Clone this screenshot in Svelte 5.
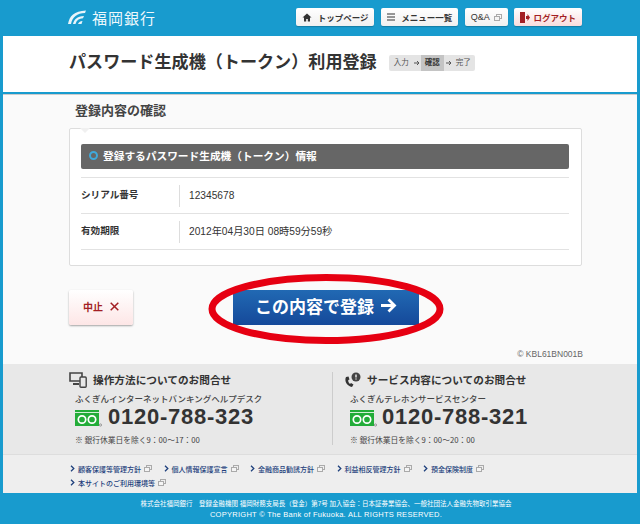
<script>
	const nav = [
		{ label: 'トップページ', icon: 'home' },
		{ label: 'メニュー一覧', icon: 'menu' },
		{ label: 'Q&A', icon: 'ext' },
	];

	const contacts = [
		{
			title: '操作方法についてのお問合せ',
			icon: 'pc',
			desk: 'ふくぎんインターネットバンキングヘルプデスク',
			tel: '0120-788-323',
			hours: '※ 銀行休業日を除く9：00～17：00',
		},
		{
			title: 'サービス内容についてのお問合せ',
			icon: 'tel',
			desk: 'ふくぎんテレホンサービスセンター',
			tel: '0120-788-321',
			hours: '※ 銀行休業日を除く9：00～20：00',
		},
	];

	const links = [
		'顧客保護等管理方針',
		'個人情報保護宣言',
		'金融商品勧誘方針',
		'利益相反管理方針',
		'預金保険制度',
		'本サイトのご利用環境等',
	];
</script>

{#snippet ext()}
	<svg class="ext" width="8" height="7" viewBox="0 0 8 7">
		<rect x="2.500" y="0.500" width="5" height="4" fill="none" stroke="#aaa" />
		<rect x="0.500" y="2.500" width="5" height="4" fill="#f4f4f4" stroke="#aaa" />
	</svg>
{/snippet}

{#snippet arrow()}
	<svg class="step-arrow" width="6" height="6" viewBox="0 0 6 6"><path d="M0 3h5M3 1l2 2-2 2" fill="none" stroke="#555" stroke-width="1" /></svg>
{/snippet}

<div class="page">
	<header>
		<div class="logo">
			<svg width="18" height="14" viewBox="0 0 18 14">
				<path d="M0 14C1.500 6 6 1 18 0.500L17 3C9 3 4.500 7 3 14zM5 14C6 9.500 9 6.500 16 6L15 8.300C11 8.500 8.500 10.500 7.500 14zM10 14C10.500 12.500 12 11 14.500 11L13.500 14z" fill="#e8f4fa" />
			</svg>
			<span>福岡銀行</span>
		</div>
		<nav>
			{#each nav as item}
				<button class="nav-btn" class:qa={item.icon === 'ext'}>
					{#if item.icon === 'home'}
						<svg width="10" height="9" viewBox="0 0 9 9"><path d="M4.500 0.500L9 4.500H7.500V8.500H5.300V6H3.700V8.500H1.500V4.500H0z" fill="#333" /></svg>
					{:else if item.icon === 'menu'}
						<svg width="8" height="8" viewBox="0 0 8 8"><path d="M0 1h8M0 4h8M0 7h8" stroke="#333" stroke-width="1.200" /></svg>
					{/if}
					<span>{item.label}</span>
					{#if item.icon === 'ext'}{@render ext()}{/if}
				</button>
			{/each}
			<button class="nav-btn logout">
				<svg width="10" height="11" viewBox="0 0 10 11"><path d="M0 0h5v11H0z" fill="#a31f24" /><path d="M6 4h1.500V2L10 5.500 7.500 9V7H6z" fill="#a31f24" /></svg>
				<span>ログアウト</span>
			</button>
		</nav>
	</header>

	<div class="title-area">
		<h1>パスワード生成機（トークン）利用登録</h1>
		<div class="steps">
			<span>入力</span>
			{@render arrow()}
			<span class="now">確認</span>
			{@render arrow()}
			<span class="last">完了</span>
		</div>
	</div>

	<main>
		<h2>登録内容の確認</h2>
		<section class="card">
			<div class="bar"><b class="ring"></b>登録するパスワード生成機（トークン）情報</div>
			<dl>
				<div class="row">
					<dt>シリアル番号</dt>
					<dd>12345678</dd>
				</div>
				<div class="row">
					<dt>有効期限</dt>
					<dd>2012年04月30日 08時59分59秒</dd>
				</div>
			</dl>
		</section>

		<div class="actions">
			<button class="cancel">中止
				<svg width="9" height="9" viewBox="0 0 9 9"><path d="M.7.7l7.600 7.600M8.300.7L.7 8.300" stroke="#a31f24" stroke-width="1.500" /></svg>
			</button>
			<button class="submit">この内容で登録
				<svg width="17" height="15" viewBox="0 0 17 15"><path d="M1 7.500h13M8.500 1.500l6 6-6 6" fill="none" stroke="#fff" stroke-width="2.800" /></svg>
			</button>
		</div>
		<svg class="ellipse" width="238" height="74" viewBox="0 0 238 74">
			<ellipse cx="119" cy="37" rx="114" ry="31.500" fill="none" stroke="#e60012" stroke-width="7" />
		</svg>
		<p class="code">© KBL61BN001B</p>
	</main>

	<section class="contact">
		{#each contacts as c}
			<div class="contact-col">
				<h3>
					{#if c.icon === 'pc'}
						<svg width="18" height="16" viewBox="0 0 18 16">
							<path d="M1 1h12v8H1z" fill="none" stroke="#444" stroke-width="1.600" />
							<path d="M4 12h6" stroke="#444" stroke-width="2" />
							<rect x="11" y="5" width="6.200" height="10.200" rx="1" fill="#e8e8e8" stroke="#444" stroke-width="1.400" />
						</svg>
					{:else}
						<svg width="18" height="16" viewBox="0 0 18 16">
							<path d="M2 5C0 9 3 14 8 15l1.500-2.500-2.500-1.500-1 1C4.500 11 4 9 4.300 8l1.200-.5L4.500 4.500z" fill="#333" />
							<circle cx="12" cy="5" r="4.500" fill="#444" />
							<path d="M12 2.500v3M12 6.500v1" stroke="#fff" stroke-width="1.300" />
						</svg>
					{/if}
					{c.title}
				</h3>
				<p class="desk">{c.desk}</p>
				<div class="tel">
					<svg width="27" height="17" viewBox="0 0 27 17">
						<rect width="24" height="16" fill="#22ac38" />
						<path d="M0 2.500h24" stroke="#fff" stroke-width="0.800" />
						<circle cx="7" cy="9.500" r="3.700" fill="none" stroke="#fff" stroke-width="1.700" />
						<circle cx="17" cy="9.500" r="3.700" fill="none" stroke="#fff" stroke-width="1.700" />
						<circle cx="25.500" cy="15" r="1.100" fill="none" stroke="#666" stroke-width="0.600" />
					</svg>
					<span>{c.tel}</span>
				</div>
				<p class="hours">{c.hours}</p>
			</div>
		{/each}
	</section>

	<ul class="links">
		{#each links as link}
			<li>
				<svg width="5" height="7" viewBox="0 0 5 7"><path d="M1 .8L3.800 3.500 1 6.200" fill="none" stroke="#1d3f7c" stroke-width="1.300" /></svg>
				<span>{link}</span>
				{@render ext()}
			</li>
		{/each}
	</ul>

	<footer>
		<p>株式会社福岡銀行　登録金融機関 福岡財務支局長（登金）第7号 加入協会：日本証券業協会、一般社団法人金融先物取引業協会</p>
		<p class="copy">COPYRIGHT © The Bank of Fukuoka. ALL RIGHTS RESERVED.</p>
	</footer>
</div>

<style>
	:global(body) {
		margin: 0;
		background: #189bce;
	}

	.page {
		width: 640px;
		height: 524px;
		overflow: hidden;
		background: #189bce;
		font-family: 'Liberation Sans', 'Noto Sans CJK JP', sans-serif;
		color: #333;
	}

	p,
	h1,
	h2,
	h3,
	dl,
	dd,
	ul {
		margin: 0;
		padding: 0;
	}

	header {
		height: 36px;
		box-sizing: border-box;
		padding: 8px 58px 0 68px;
		display: flex;
		justify-content: space-between;
	}

	.logo {
		display: flex;
		align-items: center;
		gap: 6px;
		height: 18px;
		color: #eef8fc;
		font-size: 15px;
		letter-spacing: 1px;
		font-weight: 400;
	}

	nav {
		display: flex;
		gap: 6.670px;
	}

	.nav-btn {
		height: 18px;
		padding: 0 6px;
		border: 0;
		border-radius: 2px;
		background: linear-gradient(#fff, #f0f0f0);
		box-shadow: 0 1px 1px rgba(0, 0, 0, 0.2);
		font-family: inherit;
		font-size: 8.500px;
		font-weight: 700;
		color: #333;
		display: flex;
		align-items: center;
		gap: 6px;
	}

	.nav-btn.qa {
		gap: 4px;
		font-weight: 400;
		font-size: 9px;
	}

	.logout {
		background: linear-gradient(#fff, #fbdcdc);
		color: #a31f24;
		gap: 3px;
	}

	.title-area {
		height: 56px;
		margin: 0 3px;
		box-sizing: border-box;
		padding: 0 0 2px 66px;
		background: #fff;
		display: flex;
		align-items: center;
		gap: 12px;
	}

	h1 {
		font-size: 17.100px;
		font-weight: 700;
		line-height: 24px;
		color: #333;
		white-space: nowrap;
	}

	.steps {
		height: 16px;
		padding: 0 4px 0 5px;
		display: flex;
		align-items: stretch;
		background: #e4e4e4;
		border-radius: 2px;
		font-size: 7.500px;
		line-height: 16px;
		color: #555;
	}

	.step-arrow {
		align-self: center;
		margin: 0 1px 0 5px;
	}

	.steps .now {
		background: #c4c4c4;
		padding: 0 4px;
		font-weight: 700;
		color: #333;
	}

	.steps .now + .step-arrow {
		margin: 0 4px 0 2px;
	}

	main {
		position: relative;
		height: 270px;
		margin: 2px 3px 0;
		box-sizing: border-box;
		padding: 7px 55px 0 66px;
		background: #fafafa;
		border-top: 1px solid #ccc;
	}

	h2 {
		margin-left: 6px;
		font-size: 13px;
		line-height: 18px;
		color: #444;
	}

	.card {
		position: relative;
		margin-top: 8px;
		height: 138px;
		box-sizing: border-box;
		padding: 15px 12px 0 11px;
		background: #fff;
		border: 1px solid #ddd;
		border-radius: 2px;
	}

	.card::before {
		content: '';
		position: absolute;
		top: -1px;
		left: 10px;
		border: 5px solid transparent;
		border-top-color: #f0f0f0;
		border-bottom: 0;
	}

	.bar {
		height: 25px;
		box-sizing: border-box;
		padding: 0 0 2px 8px;
		display: flex;
		align-items: center;
		gap: 5px;
		background: #666;
		border-radius: 2px;
		color: #fff;
		font-size: 10.700px;
		font-weight: 700;
	}

	.ring {
		width: 5px;
		height: 5px;
		border: 2px solid #3fa9dc;
		border-radius: 50%;
	}

	dl {
		margin-top: 8px;
		border-top: 1px solid #e2e2e2;
	}

	.row {
		height: 36px;
		box-sizing: border-box;
		display: flex;
		align-items: center;
		border-bottom: 1px solid #e2e2e2;
		font-size: 10.200px;
	}

	dt {
		width: 98px;
		margin-top: -3px;
		font-size: 9.600px;
		font-weight: 700;
	}

	dd {
		height: 22px;
		line-height: 22px;
		padding-left: 9px;
		border-left: 1px solid #ddd;
	}

	.actions {
		margin-top: 24px;
		display: flex;
		gap: 100px;
	}

	.cancel {
		width: 64px;
		height: 35px;
		padding: 0 0 2px;
		border: 0;
		border-radius: 2px;
		background: linear-gradient(#fff, #fde6e6);
		box-shadow: 0 1px 2px rgba(0, 0, 0, 0.35);
		font-family: inherit;
		font-size: 10px;
		font-weight: 700;
		color: #a31f24;
		display: flex;
		align-items: center;
		justify-content: center;
		gap: 7px;
	}

	.submit {
		width: 186px;
		height: 35px;
		padding: 0 0 4px;
		border: 0;
		background: linear-gradient(#2169b3, #15499a);
		font-family: inherit;
		font-size: 17px;
		font-weight: 700;
		color: #fff;
		display: flex;
		align-items: center;
		justify-content: center;
		gap: 6px;
	}

	.ellipse {
		position: absolute;
		left: 204px;
		top: 177px;
	}

	.code {
		margin-top: 23px;
		margin-right: -1px;
		text-align: right;
		font-size: 8.500px;
		line-height: 12px;
		color: #666;
	}

	.contact {
		height: 90px;
		margin: 0 3px;
		box-sizing: border-box;
		padding: 8px 0 0 66px;
		background: #e8e8e8;
		display: grid;
		grid-template-columns: 263px 260px;
	}

	.contact-col + .contact-col {
		padding-left: 11px;
		border-left: 1px solid #ccc;
		height: 73px;
	}

	.contact-col + .contact-col h3 {
		gap: 5px;
	}

	.contact-col + .contact-col .tel {
		gap: 5px;
	}

	h3 {
		display: flex;
		align-items: center;
		gap: 6px;
		font-size: 10.670px;
		line-height: 16px;
		color: #333;
	}

	.desk {
		margin: 5px 0 0 6px;
		font-size: 8.500px;
		line-height: 12px;
		font-weight: 500;
		color: #444;
	}

	.tel {
		margin: 2px 0 0 6px;
		height: 20px;
		display: flex;
		align-items: center;
		gap: 6px;
		font-size: 22px;
		font-weight: 700;
		letter-spacing: 0.750px;
		color: #333;
	}

	.tel svg {
		margin-top: 3px;
	}

	.hours {
		margin: 7px 0 0 6px;
		font-family: 'Noto Sans CJK JP', sans-serif;
		font-size: 7.750px;
		line-height: 12px;
		color: #444;
	}

	.links {
		height: 39px;
		margin: 0 3px;
		box-sizing: border-box;
		padding: 7px 50px 0 67px;
		background: #eee;
		border-top: 1px solid #ddd;
		list-style: none;
		display: flex;
		flex-wrap: wrap;
		align-content: flex-start;
		column-gap: 11.500px;
		row-gap: 1px;
	}

	.links li {
		height: 13px;
		display: flex;
		align-items: center;
		gap: 3px;
		font-size: 7px;
		font-weight: 500;
		color: #1d3f7c;
	}

	.ext {
		flex: none;
	}

	footer {
		padding: 6px 0 0 12px;
		text-align: center;
		color: #fff;
		font-size: 6.500px;
		line-height: 10.500px;
	}

	.copy {
		font-size: 7.500px;
		letter-spacing: 0.270px;
	}
</style>
